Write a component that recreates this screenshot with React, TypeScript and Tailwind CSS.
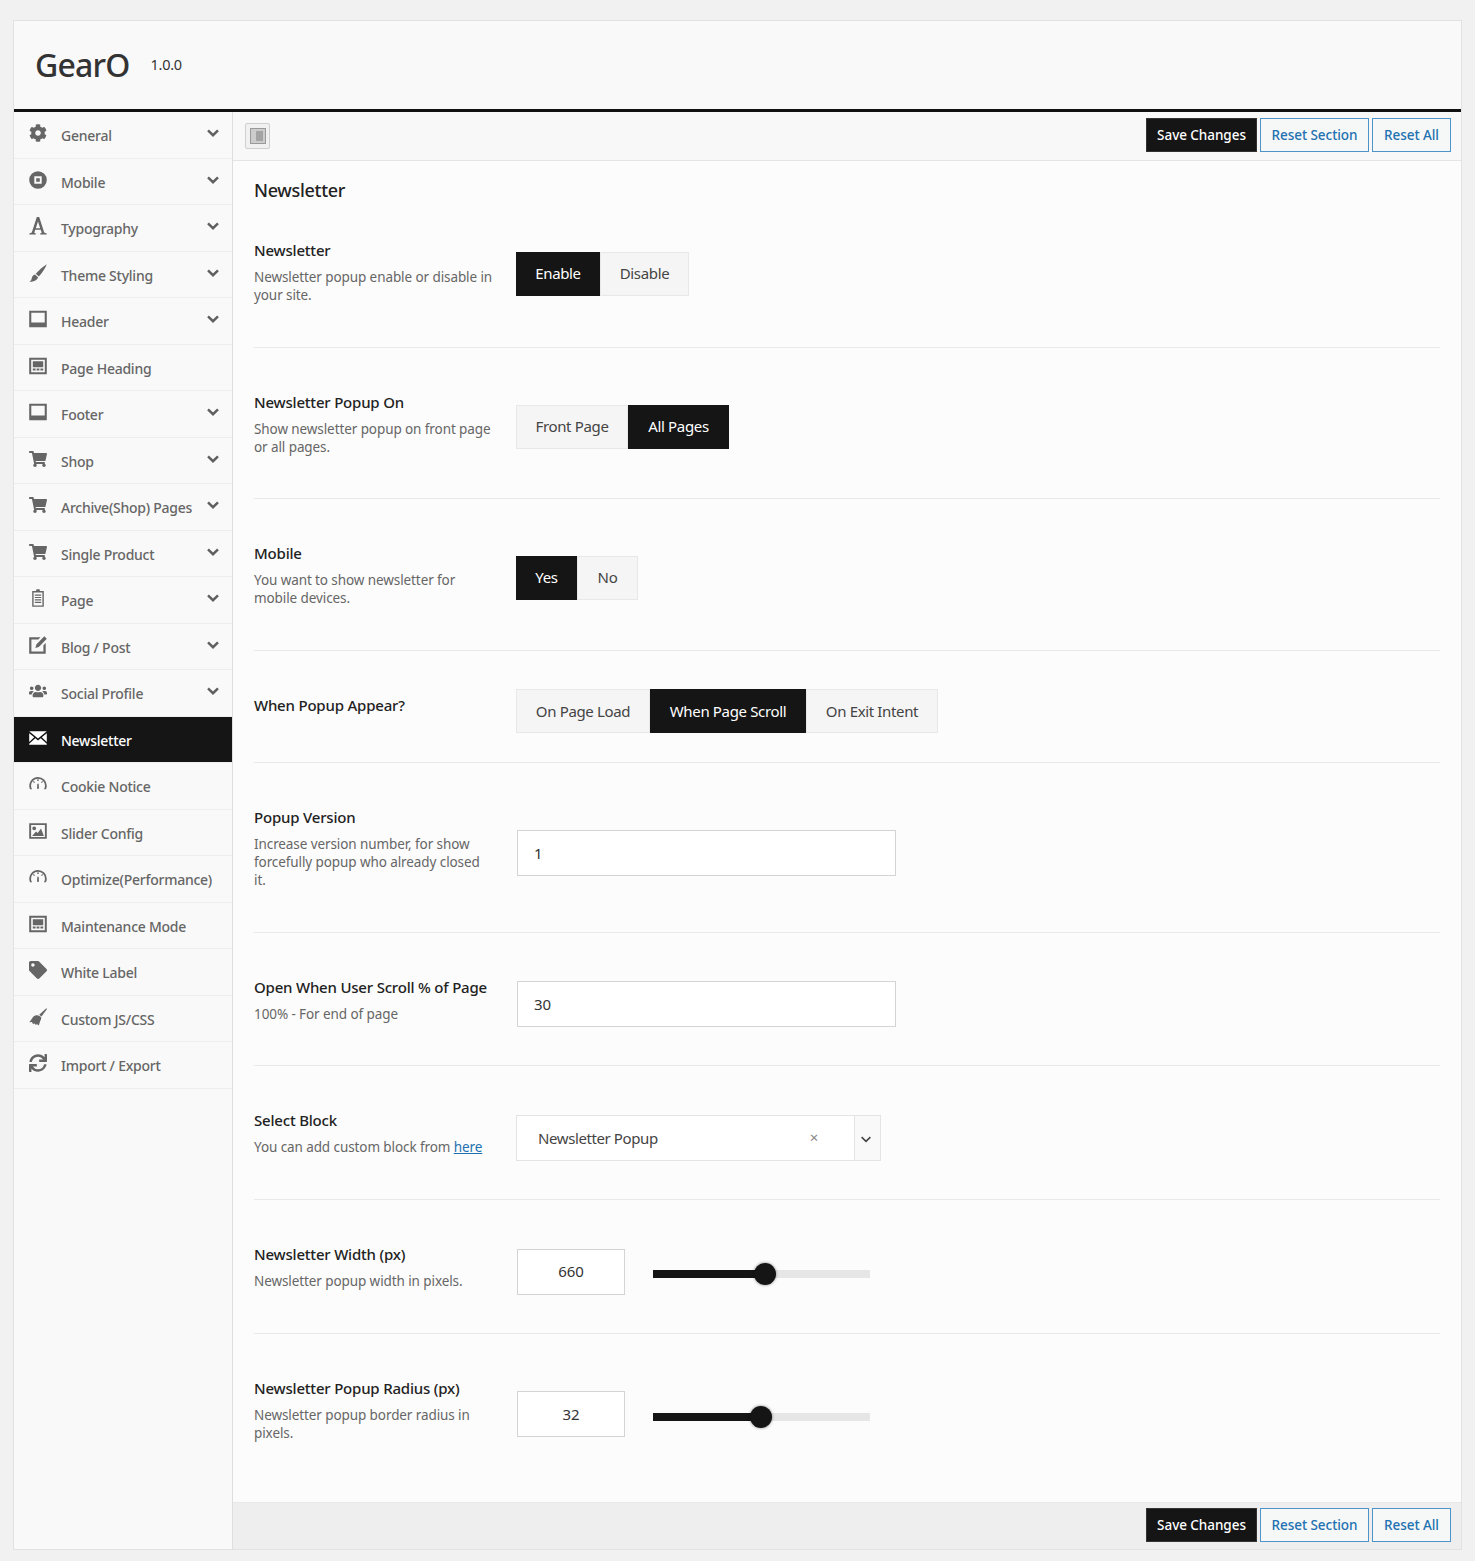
import React from "react";
import {
  FaCog,
  FaShoppingCart,
  FaUsers,
  FaTag,
  FaSync,
} from "react-icons/fa";

type IconProps = { className?: string };

const Svg: React.FC<IconProps & { children: React.ReactNode }> = ({ className, children }) => (
  <svg viewBox="0 0 18 18" className={className} fill="currentColor">
    {children}
  </svg>
);

const MobileIcon = ({ className }: IconProps) => (
  <Svg className={className}>
    <path fillRule="evenodd" d="M9 .2a8.800 8.800 0 1 1 0 17.600A8.800 8.800 0 0 1 9 .2ZM5.300 5.300v7.400h7.400V5.300H5.300Zm1.900 1.900h3.600v3.600H7.200V7.200Z" />
  </Svg>
);
const TypeIcon = ({ className }: IconProps) => (
  <Svg className={className}>
    <path d="M7.800 0h2.400l5 15.500 2.500 1v1h-6.500v-1l1.500-.8-.9-3H6.200l-.9 3 1.500.8v1H.3v-1l2.500-1L7.800 0ZM9 4.500l-2.200 6.700h4.400L9 4.500Z" />
  </Svg>
);
const BrushIcon = ({ className }: IconProps) => (
  <Svg className={className}>
    <path d="M17.800.2c-1.300 3.800-4.800 9-8 12.300L6.800 9.800C9.800 6.200 14 2.300 17.800.2ZM6 10.500l3 2.800c-.5 2.700-3.500 4.500-8.800 4.500 2.200-1 2.200-2.500 2.800-4.400.5-1.500 1.500-2.500 3-2.900Z" />
  </Svg>
);
const LayoutIcon = ({ className }: IconProps) => (
  <Svg className={className}>
    <path fillRule="evenodd" d="M.2.800h17.600v16.400H.2V.8Zm2.100 2v9.700h13.400V2.800H2.300Z" />
  </Svg>
);
const HeadingIcon = ({ className }: IconProps) => (
  <Svg className={className}>
    <path fillRule="evenodd" d="M.2.800h17.600v16.400H.2V.8Zm2 2v12.400h13.600V2.800H2.200Zm1.600 1.500h10.400v5.900H3.800V4.300Zm0 7.300h2.800v2H3.800v-2Zm3.800 0h2.800v2H7.600v-2Zm3.800 0h2.800v2h-2.800v-2Z" />
  </Svg>
);
const PageIcon = ({ className }: IconProps) => (
  <Svg className={className}>
    <path fillRule="evenodd" d="M7.500.2h3l.5 1.800h3.800v15.800H3.200V2H7L7.500.2ZM4.600 3.500v12.900h8.800V3.500H4.600ZM5.800 5.500h6.400v1.200H5.800V5.500Zm0 2.400h6.400v1.200H5.800V7.900Zm0 2.400h6.400v1.200H5.800v-1.200Zm0 2.400h6.400v1.200H5.800v-1.200Z" />
  </Svg>
);
const EditIcon = ({ className }: IconProps) => (
  <Svg className={className}>
    <path d="M.2 1.300h11.300L9.300 3.500H2.400v12h12V9.300l2.300-2.300v10.800H.2V1.300ZM15.300.2l2.500 2.500-8 8.300-3.400.9.900-3.400 8-8.300Z" />
  </Svg>
);
const MailIcon = ({ className }: IconProps) => (
  <Svg className={className}>
    <path d="M.2 2.300h17.600L9 9.500.2 2.300Zm0 1.900 5 4.100-5 4.600V4.200Zm17.600 0v8.700l-5-4.600 5-4.100ZM6.300 9.200 9 11.400l2.700-2.200 6.100 5.600v.9H.2v-.9l6.100-5.600Z" />
  </Svg>
);
const GaugeIcon = ({ className }: IconProps) => (
  <Svg className={className}>
    <path d="M9 2a8.800 8.800 0 0 1 8.800 8.800c0 1.300-.3 2.500-.8 3.500h-2c.6-1 1-2.200 1-3.500a7 7 0 0 0-14 0c0 1.300.4 2.500 1 3.500H1A8.800 8.800 0 0 1 9 2Z" />
    <path d="M8.300 4.200h1.400v1.700H8.300V4.200ZM4.700 6l1.300 1.200-.9.900L4 6.800 4.700 6Zm8.600 0 .7.800-1.100 1.300-.9-.9L13.300 6ZM8.300 8.700h1.400l.3 5H8l.3-5Z" />
  </Svg>
);
const ImageIcon = ({ className }: IconProps) => (
  <Svg className={className}>
    <path fillRule="evenodd" d="M.2 1.200h17.600v15.600H.2V1.200Zm1.900 1.900v11.800h13.800V3.100H2.100Z" />
    <path d="M3.100 13.900 7 9.500l1.700 1.500L12 6.500l2.900 7.400H3.100ZM5.200 4.400a1.900 1.900 0 1 1 0 3.800 1.900 1.900 0 0 1 0-3.800Z" />
  </Svg>
);
const BroomIcon = ({ className }: IconProps) => (
  <Svg className={className}>
    <path d="M17.300.2 18 .9l-5.500 7.500-2.300-1.700L17.300.2Z" />
    <path d="M4.500 8.500C6.500 7 9 6.500 12 9c.5 1.500 0 3-.8 4l-1.400 4.500c-.8-.5-1.400-1.100-1.900-1.700L7.200 17c-.8-.5-1.400-1-2-1.800l-1 1c-.5-.6-.9-1.200-1.200-2.200l-2.800.3c2-1.900 2.800-4.300 4.300-5.800Z" />
  </Svg>
);
const ChevronIcon = ({ className }: IconProps) => (
  <svg viewBox="0 0 12 8" className={className} fill="none" stroke="currentColor" strokeWidth="2.4">
    <path d="M1 1.300 6 6.200l5-4.900" />
  </svg>
);

type NavItem = { label: string; icon: React.ComponentType<IconProps>; sub?: boolean; active?: boolean };

const NAV: NavItem[] = [
  { label: "General", icon: FaCog, sub: true },
  { label: "Mobile", icon: MobileIcon, sub: true },
  { label: "Typography", icon: TypeIcon, sub: true },
  { label: "Theme Styling", icon: BrushIcon, sub: true },
  { label: "Header", icon: LayoutIcon, sub: true },
  { label: "Page Heading", icon: HeadingIcon },
  { label: "Footer", icon: LayoutIcon, sub: true },
  { label: "Shop", icon: FaShoppingCart, sub: true },
  { label: "Archive(Shop) Pages", icon: FaShoppingCart, sub: true },
  { label: "Single Product", icon: FaShoppingCart, sub: true },
  { label: "Page", icon: PageIcon, sub: true },
  { label: "Blog / Post", icon: EditIcon, sub: true },
  { label: "Social Profile", icon: FaUsers, sub: true },
  { label: "Newsletter", icon: MailIcon, active: true },
  { label: "Cookie Notice", icon: GaugeIcon },
  { label: "Slider Config", icon: ImageIcon },
  { label: "Optimize(Performance)", icon: GaugeIcon },
  { label: "Maintenance Mode", icon: HeadingIcon },
  { label: "White Label", icon: FaTag },
  { label: "Custom JS/CSS", icon: BroomIcon },
  { label: "Import / Export", icon: FaSync },
];

const Sidebar = () => (
  <div className="w-[219px] flex-none border-r border-[#dedede] bg-[#f9f9f9]">
    {NAV.map((item) => {
      const Icon = item.icon;
      return (
        <div
          key={item.label}
          className={`flex h-[46.5px] items-center border-b border-[#eeeeee] pl-[15px] pr-[13px] text-[14px] font-medium tracking-[-0.25px] ${
            item.active ? "bg-[#151515] text-white" : "text-[#666666]"
          }`}
        >
          <Icon className="mb-[3px] h-[18px] w-[18px] flex-none" />
          <span className="ml-[14px] mt-[2px] flex-1 whitespace-nowrap">{item.label}</span>
          {item.sub && <ChevronIcon className="mb-[3px] h-[8px] w-[12px] flex-none text-[#5f5f5f]" />}
        </div>
      );
    })}
  </div>
);

const Actions = () => (
  <div className="mb-[2px] flex gap-[3px] text-[13.5px] font-medium tracking-[-0.05px]">
    <button className="h-[34px] w-[111px] border border-[#333333] bg-[#151515] pt-[1px] text-white">Save Changes</button>
    <button className="h-[34px] w-[109px] border border-[#4f94c9] bg-[#f6f7f7] pt-[1px] text-[#2271b1]">Reset Section</button>
    <button className="h-[34px] w-[79px] border border-[#4f94c9] bg-[#f6f7f7] pt-[1px] text-[#2271b1]">Reset All</button>
  </div>
);

type Opt = { label: string; width: string; on?: boolean };

const ButtonSet = ({ options, offset = "mt-[8px]" }: { options: Opt[]; offset?: string }) => (
  <div className={`flex text-[15px] tracking-[-0.35px] ${offset}`}>
    {options.map((o) => (
      <div
        key={o.label}
        className={`flex h-[44px] items-center justify-center pb-[1px] ${o.width} ${
          o.on ? "bg-[#151515] text-white" : "border border-[#e8e8e8] bg-[#f5f5f5] text-[#444444]"
        }`}
      >
        {o.label}
      </div>
    ))}
  </div>
);

const TextInput = ({ value }: { value: string }) => (
  <div className="ml-[1px] mt-[11px] flex h-[46px] w-[379px] items-center border border-[#d4d4d4] bg-white pl-[16px] text-[15px] text-[#333333]">
    {value}
  </div>
);

const SelectBox = () => (
  <div className="mt-[11px] flex h-[46px] w-[365px] border border-[#e4e4e4] bg-white text-[15px] tracking-[-0.4px] text-[#444444]">
    <div className="flex flex-1 items-center pl-[21px]">
      <span className="flex-1">Newsletter Popup</span>
      <span className="mb-[1px] mr-[36px] text-[15px] text-[#888888]">×</span>
    </div>
    <div className="flex w-[26px] flex-none items-center justify-center border-l border-[#e4e4e4] bg-[#f9f9f9] pr-[3px]">
      <ChevronIcon className="mt-[2px] h-[7px] w-[12px] stroke-[1.8] text-[#444444]" />
    </div>
  </div>
);

const Slider = ({ value, percent }: { value: string; percent: number }) => (
  <div className="ml-[1px] mt-[11px] flex items-center gap-[28px]">
    <div className="flex h-[46px] w-[108px] items-center justify-center border border-[#d4d4d4] bg-white text-[15px] text-[#333333]">
      {value}
    </div>
    <div className="relative mt-[5px] h-[8px] w-[217px] bg-[#e6e6e6]">
      <div className="h-full bg-[#151515]" style={{ width: `${percent}%` }} />
      <div
        className="absolute top-[-7px] ml-[-11px] h-[22px] w-[22px] rounded-full bg-[#151515] shadow-[0_0_3px_rgba(0,0,0,0.5)]"
        style={{ left: `${percent}%` }}
      />
    </div>
  </div>
);

const Field = ({
  label,
  desc,
  last,
  children,
}: {
  label: string;
  desc?: React.ReactNode;
  last?: boolean;
  children: React.ReactNode;
}) => (
  <div className={`flex items-center ${last ? "" : "border-b border-[#e9e9e9]"}`}>
    <div className="w-[262px] flex-none pt-[44px] pb-[42.67px] pr-[23px]">
      <div className="min-h-[24.300px]">
        <div className="text-[15px] leading-[20px] font-medium tracking-[-0.2px] text-[#222222]">{label}</div>
        {desc && <div className="mt-[8px] text-[13.5px] leading-[18px] tracking-[-0.09px] text-[#666666]">{desc}</div>}
      </div>
    </div>
    {children}
  </div>
);

export default function App() {
  return (
    <div className="min-h-[1561px] bg-[#f1f1f1] pt-[20px] pb-[12px] pl-[13px] pr-[13px] font-['Noto_Sans','Open_Sans',sans-serif]">
      <div className="border border-[#e2e2e2] bg-[#f9f9f9]">
        <div className="flex h-[91px] items-center border-b-[3px] border-[#111111] pl-[21px]">
          <span className="text-[32px] font-medium tracking-[-0.8px] text-[#333333]">GearO</span>
          <span className="ml-[21px] text-[14.500px] tracking-[-0.3px] text-[#333333]">1.0.0</span>
        </div>
        <div className="flex">
          <Sidebar />
          <div className="flex min-w-0 flex-1 flex-col">
            <div className="flex h-[49px] items-center justify-between border-b border-[#e4e4e4] bg-[#f8f8f8] pl-[12px] pr-[10px]">
              <div className="flex h-[26px] w-[25px] items-center justify-center rounded-[2px] border border-[#cfcfcf] bg-[#f1f1f1]">
                <div className="flex h-[16px] w-[16px] border border-[#999999] bg-[#cccccc] p-[2px]">
                  <div className="ml-[3px] w-full bg-[#a3a3a3]" />
                </div>
              </div>
              <Actions />
            </div>
            <div className="flex-1 bg-[#fcfcfc] pl-[21px] pr-[21px] pb-[17.7px]">
              <h2 className="mb-[-6px] pt-[17px] text-[18px] leading-[24px] font-medium tracking-[-0.3px] text-[#222222]">Newsletter</h2>
              <Field label="Newsletter" desc="Newsletter popup enable or disable in your site.">
                <ButtonSet
                  offset="mt-[5px]"
                  options={[
                    { label: "Enable", width: "w-[84px]", on: true },
                    { label: "Disable", width: "w-[89px]" },
                  ]}
                />
              </Field>
              <Field label="Newsletter Popup On" desc="Show newsletter popup on front page or all pages.">
                <ButtonSet
                  options={[
                    { label: "Front Page", width: "w-[112px]" },
                    { label: "All Pages", width: "w-[101px]", on: true },
                  ]}
                />
              </Field>
              <Field label="Mobile" desc="You want to show newsletter for mobile devices.">
                <ButtonSet
                  offset="mt-[6px]"
                  options={[
                    { label: "Yes", width: "w-[61px]", on: true },
                    { label: "No", width: "w-[61px]" },
                  ]}
                />
              </Field>
              <Field label="When Popup Appear?">
                <ButtonSet
                  offset="mt-[10px]"
                  options={[
                    { label: "On Page Load", width: "w-[134px]" },
                    { label: "When Page Scroll", width: "w-[156px]", on: true },
                    { label: "On Exit Intent", width: "w-[132px]" },
                  ]}
                />
              </Field>
              <Field
                label="Popup Version"
                desc="Increase version number, for show forcefully popup who already closed it."
              >
                <TextInput value="1" />
              </Field>
              <Field label="Open When User Scroll % of Page" desc="100% - For end of page">
                <TextInput value="30" />
              </Field>
              <Field
                label="Select Block"
                desc={
                  <>
                    You can add custom block from <span className="text-[#2271b1] underline">here</span>
                  </>
                }
              >
                <SelectBox />
              </Field>
              <Field label="Newsletter Width (px)" desc="Newsletter popup width in pixels.">
                <Slider value="660" percent={51.6} />
              </Field>
              <Field label="Newsletter Popup Radius (px)" desc="Newsletter popup border radius in pixels." last>
                <Slider value="32" percent={49.8} />
              </Field>
            </div>
            <div className="flex h-[47px] items-start justify-end border-t border-[#e8e8e8] bg-[#eeeeee] pt-[5px] pr-[10px]">
              <Actions />
            </div>
          </div>
        </div>
      </div>
    </div>
  );
}
